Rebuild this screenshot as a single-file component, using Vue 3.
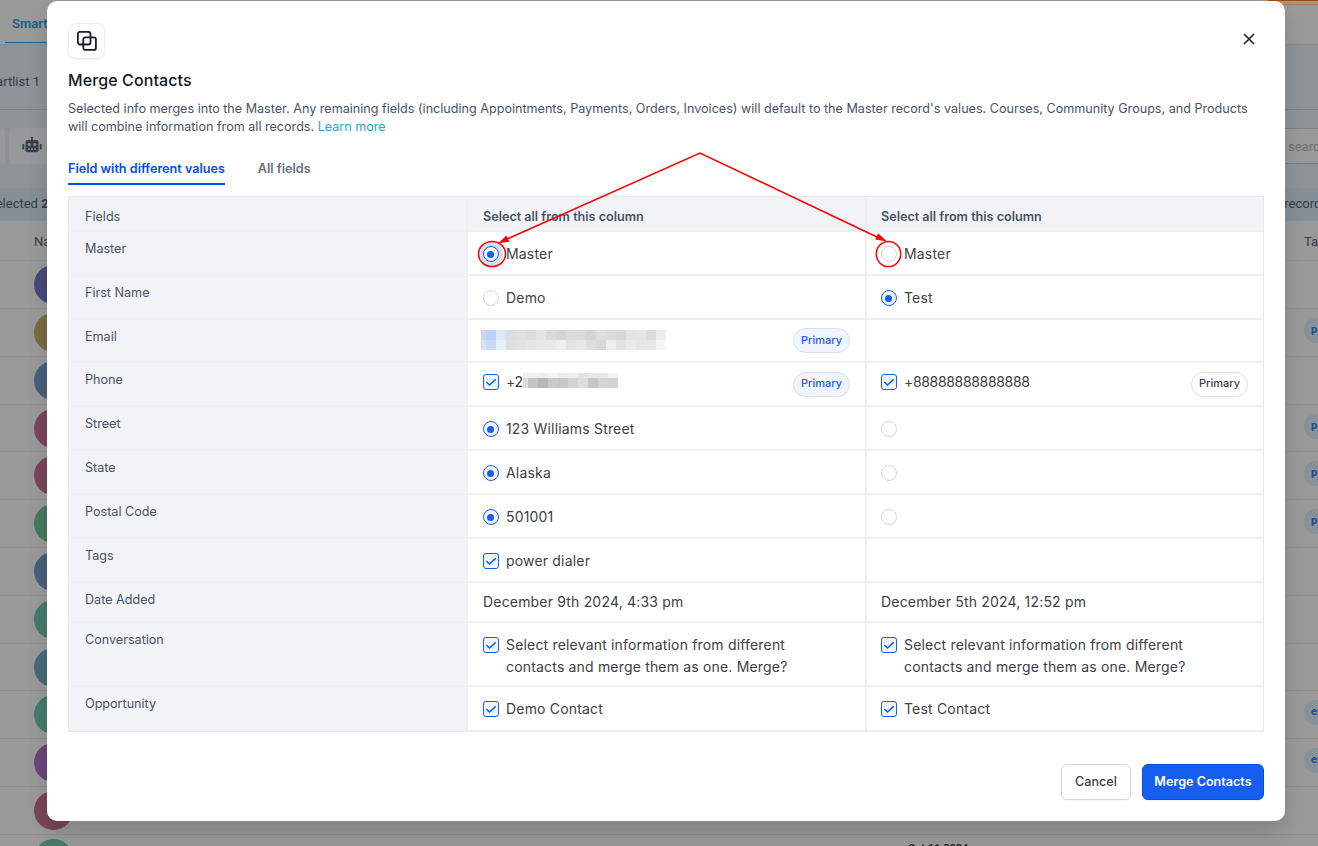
<script setup>
import { ref } from 'vue';

const tab = ref('diff');

const radio = (checked, text = '', focus = false) => ({ kind: 'radio', checked, text, focus });
const check = (text, extra = {}) => ({ kind: 'check', checked: true, text, ...extra });

const emailMask = {
  widths: [5, 10, 10, 10, 10, 10, 10, 10, 10, 10, 10, 10, 10, 10, 10, 10, 10, 10, 10],
  rows: [
    { h: 10, colors: ['#c9d8f6', '#bdd0f6', '#e0e8fb', '#dcdedd', '#dedfdf', '#dcdcdd', '#e5e5e5', '#dadada', '#d3d5d4', '#dcdcdd', '#dadadb', '#d3d5d4', '#dededf', '#dcdcdd', '#d8d8d9', '#e4e4e4', '#e5e5e5', '#dadddc', '#eceeed'] },
    { h: 10, colors: ['#d5e1fa', '#cad9f8', '#e8effd', '#dfe1e0', '#e2e2e2', '#e5e5e5', '#e7e9e8', '#e8eae9', '#eeeeee', '#e3e3e4', '#e8e8e9', '#dddedf', '#d7d9d8', '#edefee', '#e2e2e3', '#eaeaea', '#e6e6e6', '#e6e6e6', '#f5f5f5'] },
  ],
};

const phoneMask = {
  widths: [5, 10, 10, 10, 10, 10, 10, 10, 10, 10],
  rows: [
    { h: 5, colors: ['#f0f0f0', '#f0f0f0', '#ededee', '#f3f3f3', '#eceeed', '#eeeeef', '#e3e6e5', '#e6e8e7', '#e8e8e9', '#f2f2f2'] },
    { h: 10, colors: ['#dededf', '#c4c4c5', '#b7b7b9', '#c9c9ca', '#c5c7c6', '#d1d4d3', '#dddddf', '#c4c7c6', '#d5d5d7', '#d2d2d3'] },
  ],
};

const rows = [
  { label: 'Master', height: 44, cells: [radio(true, 'Master', true), radio(false, 'Master')] },
  { label: 'First Name', height: 44, cells: [radio(false, 'Demo'), radio(true, 'Test')] },
  { label: 'Email', height: 43, cells: [{ kind: 'mask', mask: emailMask, primary: 'on' }, null] },
  {
    label: 'Phone',
    height: 44,
    cells: [check('+2', { mask: phoneMask, primary: 'on', up: true }), check('+88888888888888', { primary: 'off', up: true })],
  },
  { label: 'Street', height: 44, cells: [radio(true, '123 Williams Street'), radio(false)] },
  { label: 'State', height: 44, cells: [radio(true, 'Alaska'), radio(false)] },
  { label: 'Postal Code', height: 44, cells: [radio(true, '501001'), radio(false)] },
  { label: 'Tags', height: 44, cells: [check('power dialer'), null] },
  {
    label: 'Date Added',
    height: 40,
    cells: [{ kind: 'text', text: 'December 9th 2024, 4:33 pm' }, { kind: 'text', text: 'December 5th 2024, 12:52 pm' }],
  },
  {
    label: 'Conversation',
    height: 64,
    cells: [
      check('Select relevant information from different contacts and merge them as one. Merge?'),
      check('Select relevant information from different contacts and merge them as one. Merge?'),
    ],
  },
  { label: 'Opportunity', height: 44, cells: [check('Demo Contact'), check('Test Contact')] },
];

const contacts = [
  { color: '#48497a', letter: 'T', height: 48 },
  { color: '#7a6b42', letter: 'D', height: 48, tag: 'po' },
  { color: '#476179', letter: 'T', height: 48 },
  { color: '#7a455a', letter: 'T', height: 47, tag: 'po' },
  { color: '#7a455a', letter: '', height: 48, tag: 'po' },
  { color: '#467a60', letter: '', height: 48, tag: 'po' },
  { color: '#476179', letter: 'T', height: 48 },
  { color: '#467a6b', letter: 'J', height: 48 },
  { color: '#476a79', letter: '', height: 47 },
  { color: '#467a6b', letter: '', height: 48, tag: 'ex' },
  { color: '#6b457a', letter: '', height: 48, tag: 'ex' },
  { color: '#7a4554', letter: 'T', height: 48 },
  { color: '#467a6b', letter: '', height: 48, date: 'Oct 11 2024' },
];
</script>

<template>
  <div class="screen">
    <div class="page">
      <header class="topbar">
        <span class="topbar-tab">Smart Lists</span>
        <span class="topbar-accent"></span>
      </header>
      <div class="listbar"><span>Smartlist 1</span></div>
      <div class="toolbar">
        <span class="tool tool-cut"></span>
        <span class="tool">
          <svg width="20" height="16" viewBox="0 0 20 16" fill="#36424f">
            <rect x="9" y="0" width="2" height="4" />
            <rect x="3.5" y="3" width="13" height="12.3" rx="2" />
            <rect x="0.3" y="7" width="2" height="5.5" rx="0.8" />
            <rect x="17.7" y="7" width="2" height="5.5" rx="0.8" />
            <circle cx="7.2" cy="7.6" r="1.5" fill="#929699" />
            <circle cx="12.8" cy="7.6" r="1.5" fill="#929699" />
            <path d="M6 12.2h2M9 12.2h2M12 12.2h2" stroke="#929699" stroke-width="1.3" />
          </svg>
        </span>
        <span class="search">search</span>
      </div>
      <div class="selectbar">
        <span>Selected <b>2</b></span>
        <span class="selectbar-right">records</span>
      </div>
      <div class="list-head">
        <span>Name</span>
        <span class="list-head-tags">Tags</span>
      </div>
      <div v-for="(c, i) in contacts" :key="i" class="contact" :style="{ height: c.height + 'px' }">
        <span class="avatar" :style="{ background: c.color }">{{ c.letter }}</span>
        <span v-if="c.date" class="contact-date">{{ c.date }}</span>
        <span v-if="c.tag" class="contact-tag">{{ c.tag }}</span>
      </div>
    </div>

    <section class="modal">
      <div class="modal-top">
        <span class="modal-icon">
          <svg width="22" height="22" viewBox="0 0 22 22" fill="none" stroke="#1a1d24" stroke-width="1.8">
            <rect x="1.9" y="1.9" width="12.6" height="12.6" rx="2" />
            <rect x="7.3" y="7.3" width="12.6" height="12.6" rx="2" />
          </svg>
        </span>
        <button class="close">
          <svg width="12" height="12" viewBox="0 0 12 12" fill="none" stroke="#23262b" stroke-width="1.7">
            <path d="M1 1l10 10M11 1L1 11" />
          </svg>
        </button>
      </div>
      <h1 class="title">Merge Contacts</h1>
      <p class="description">
        Selected info merges into the Master. Any remaining fields (including Appointments, Payments, Orders, Invoices) will default to the Master record's values. Courses, Community Groups, and Products<br />
        will combine information from all records. <a class="link">Learn more</a>
      </p>

      <nav class="tabs">
        <a :class="['tab', { 'tab-active': tab === 'diff' }]" @click="tab = 'diff'">Field with different values</a>
        <a :class="['tab', { 'tab-active': tab === 'all' }]" @click="tab = 'all'">All fields</a>
      </nav>

      <div class="table">
        <div class="row row-head">
          <div class="label">Fields</div>
          <div class="cell">Select all from this column</div>
          <div class="cell">Select all from this column</div>
        </div>
        <div v-for="row in rows" :key="row.label" class="row" :style="{ height: row.height + 'px' }">
          <div class="label">{{ row.label }}</div>
          <div v-for="(cell, i) in row.cells" :key="i" :class="['cell', { 'cell-up': cell && cell.up }]">
            <template v-if="cell">
              <span v-if="cell.kind === 'radio'" :class="['radio', { 'radio-on': cell.checked, 'radio-focus': cell.focus }]"></span>
              <span v-if="cell.kind === 'check'" class="check">
                <svg width="12" height="12" viewBox="0 0 12 12" fill="none" stroke="#155eef" stroke-width="1.5">
                  <path d="M1.3 6l3.2 3 6.2-5.6" />
                </svg>
              </span>
              <span v-if="cell.text" class="value">{{ cell.text }}</span>
              <span v-if="cell.mask" :class="['mask', { 'mask-inline': cell.text }]">
                <span v-for="(line, r) in cell.mask.rows" :key="r" class="mask-line">
                  <i
                    v-for="(color, n) in line.colors"
                    :key="n"
                    :style="{ width: cell.mask.widths[n] + 'px', height: line.h + 'px', background: color }"
                  ></i>
                </span>
              </span>
              <span v-if="cell.primary" :class="['badge', { 'badge-on': cell.primary === 'on' }]">Primary</span>
            </template>
          </div>
        </div>
      </div>

      <footer class="actions">
        <button class="btn">Cancel</button>
        <button class="btn btn-primary">Merge Contacts</button>
      </footer>
    </section>

    <svg class="callout" width="1318" height="846" viewBox="0 0 1318 846" fill="none" stroke="#f90000" stroke-width="1.5">
      <path d="M506 239.5L700 153L878 237.5" />
      <path d="M498 243.3L506.5 235.6L509.4 241.8z" fill="#f90000" stroke="none" />
      <path d="M887 241.5L878.2 233.2L875.2 239.6z" fill="#f90000" stroke="none" />
      <ellipse cx="492" cy="254" rx="13.5" ry="12.6" />
      <ellipse cx="888.5" cy="254" rx="12.2" ry="12.6" />
    </svg>
  </div>
</template>

<style>
body {
  margin: 0;
  overflow: hidden;
}
</style>

<style scoped>
.screen {
  position: relative;
  width: 1318px;
  height: 846px;
  overflow: hidden;
  font-family: Inter, 'Liberation Sans', sans-serif;
}

.screen * {
  box-sizing: border-box;
}

.page {
  height: 846px;
  overflow: hidden;
  background: #999;
  font-family: Roboto, 'Liberation Sans', sans-serif;
  font-size: 13px;
  color: #343c46;
}

.topbar {
  display: flex;
  justify-content: space-between;
  height: 45px;
  border-bottom: 1px solid #878b8e;
}

.topbar-tab {
  width: 90px;
  height: 43px;
  margin-left: 5px;
  padding: 16px 7px 0;
  border-bottom: 1px solid #176188;
  font-weight: 600;
  color: #176188;
}

.topbar-accent {
  width: 50px;
  height: 5px;
  border-top: 1px solid #a34b0b;
  border-bottom: 1px solid #a77c68;
}

.listbar {
  height: 65px;
  padding-top: 29px;
  border-bottom: 1px solid #7d858c;
  background: #8d9396;
}

.listbar span {
  display: block;
  margin-left: -23px;
}

.toolbar {
  display: flex;
  height: 78px;
  padding-top: 18px;
  background: #8d9396;
}

.tool {
  display: flex;
  width: 60px;
  height: 36px;
  padding: 9px 0 0 13px;
  margin-left: 4px;
  border-radius: 4px;
  background: #969899;
}

.tool-cut {
  width: 5px;
  margin-left: 0;
  padding: 0;
}

.search {
  width: 150px;
  height: 36px;
  margin-left: auto;
  margin-right: -100px;
  padding: 10px 0 0 19px;
  border: 1px solid #7b8084;
  background: #999;
  color: #6c7177;
}

.selectbar {
  display: flex;
  justify-content: space-between;
  height: 33px;
  padding-top: 8px;
  background: #848f98;
}

.selectbar > span {
  margin-left: -12px;
}

.selectbar > .selectbar-right {
  margin-right: -10px;
}

.list-head {
  display: flex;
  justify-content: space-between;
  height: 40px;
  padding: 13px 0 0 34px;
  border-bottom: 1px solid #89939c;
}

.list-head-tags {
  width: 14px;
}

.contact {
  display: flex;
  align-items: center;
  border-bottom: 1px solid #8a8f92;
}

.avatar {
  display: flex;
  align-items: center;
  justify-content: center;
  flex: none;
  width: 39px;
  height: 39px;
  margin-left: 34px;
  border-radius: 50%;
  font-size: 14px;
  color: #a0b0b8;
}

.contact-date {
  margin: -20px 0 0 835px;
  font-size: 11px;
  font-weight: 700;
  color: #22262b;
}

.contact-tag {
  width: 14px;
  height: 25px;
  margin: 0 0 4px auto;
  padding: 5px 0 0 7px;
  border-radius: 12px 0 0 12px;
  overflow: hidden;
  background: #87919a;
  font-size: 11px;
  font-weight: 700;
  color: #154e8f;
}

.modal {
  position: absolute;
  top: 1px;
  left: 47px;
  width: 1238px;
  height: 820px;
  padding: 22px 21px 0;
  border-radius: 10px;
  background: #fff;
  box-shadow: 0 12px 20px rgba(0, 0, 0, 0.14);
}

.modal-top {
  display: flex;
  justify-content: space-between;
  height: 36px;
}

.modal-icon {
  display: flex;
  align-items: center;
  justify-content: center;
  width: 37px;
  height: 36px;
  border: 1px solid #eaecf0;
  border-radius: 8px;
  box-shadow: 0 1px 2px rgba(16, 24, 40, 0.05);
}

.close {
  display: flex;
  width: 12px;
  height: 12px;
  margin: 10px 9px 0 0;
  padding: 0;
  border: 0;
  background: none;
}

.title {
  margin: 9px 0 0;
  font-size: 16px;
  font-weight: 500;
  line-height: 24px;
  letter-spacing: 0.1px;
  color: #101828;
}

.description {
  margin: 8px 0 0;
  font-size: 12.6px;
  line-height: 18px;
  white-space: nowrap;
  color: #475467;
}

.link {
  color: #2e9fdb;
}

.tabs {
  display: flex;
  gap: 33px;
  height: 26px;
  margin-top: 23px;
}

.tab {
  height: 26px;
  font-size: 12.62px;
  font-weight: 600;
  line-height: 19px;
  color: #667085;
}

.tab-active {
  border-bottom: 2px solid #004eeb;
  color: #004eeb;
}

.table {
  width: 1196px;
  height: 536px;
  margin-top: 11px;
  border: 1px solid #e8e9ec;
}

.row {
  display: grid;
  grid-template-columns: 399px 399px 396px;
}

.label {
  padding: 8px 0 0 16px;
  border-right: 2px solid #eff0f2;
  border-bottom: 2px solid #eff0f2;
  background: #f2f3f7;
  font-size: 12.6px;
  line-height: 17px;
  color: #475467;
}

.cell {
  display: flex;
  align-items: flex-start;
  min-width: 0;
  padding: 11px 15px 0;
  border-right: 2px solid #efeff1;
  border-bottom: 2px solid #efeff1;
}

.cell:last-child {
  padding-left: 14px;
  border-right: 0;
}

.cell-up {
  padding-top: 8px;
}

.row:last-child > div {
  border-bottom-width: 1px;
}

.row-head {
  height: 35px;
}

.row-head > div {
  padding-top: 11px;
  background: #f2f3f7;
  font-size: 12.6px;
  line-height: 18px;
  color: #475467;
}

.row-head .cell {
  font-weight: 600;
}

.value {
  max-width: 300px;
  font-size: 14px;
  line-height: 22px;
  letter-spacing: 0.18px;
  color: #3d4045;
}

.cell-up .value {
  letter-spacing: -0.33px;
}

.row:nth-child(10) .cell {
  padding-top: 8px;
}

.radio,
.check {
  flex: none;
  width: 16px;
  height: 16px;
  margin: 3px 7px 0 0;
  border: 1px solid #d0d5dd;
}

.radio {
  display: flex;
  align-items: center;
  justify-content: center;
  border-radius: 50%;
}

.radio-on {
  border-color: #155eef;
  background: #eff4ff;
}

.radio-on::after {
  content: '';
  width: 7px;
  height: 7px;
  margin-right: 1px;
  border-radius: 50%;
  background: #155eef;
}

.radio-focus {
  box-shadow: 0 0 0 4px #d1e0ff;
}

.check {
  display: flex;
  padding: 1px;
  border-color: #155eef;
  border-radius: 3px;
  background: #eff4ff;
}

.mask {
  margin: -1px 0 0 -2px;
}

.mask-inline {
  margin: 2px 0 0 0;
}

.mask-line {
  display: flex;
}

.badge {
  height: 25px;
  margin: -3px 0 0 auto;
  padding: 0 7px;
  border: 1px solid #dddfe6;
  border-radius: 13px;
  font-size: 11px;
  font-weight: 500;
  line-height: 22px;
  color: #344054;
}

.cell-up .badge {
  margin-top: 1px;
  line-height: 21px;
}

.badge-on {
  background: #eff4ff;
}

.badge.badge-on {
  color: #155eef;
}

.actions {
  display: flex;
  justify-content: flex-end;
  gap: 11px;
  margin-top: 32px;
}

.btn {
  width: 70px;
  height: 36px;
  padding: 0 0 2px;
  border: 1px solid #d0d5dd;
  border-radius: 6px;
  background: #fff;
  font-family: inherit;
  font-size: 12.6px;
  font-weight: 500;
  color: #3a3f47;
  box-shadow: 0 1px 2px rgba(16, 24, 40, 0.05);
}

.btn-primary {
  width: 122px;
  border-color: #004eeb;
  background: #155eef;
  font-weight: 600;
  color: #fff;
}

.callout {
  position: absolute;
  top: 0;
  left: 0;
  pointer-events: none;
}
</style>
